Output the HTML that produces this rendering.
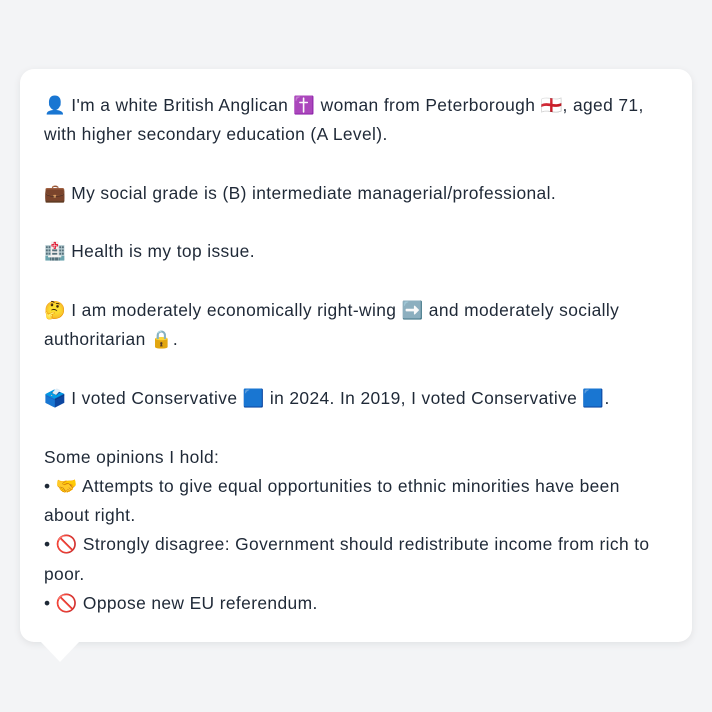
<!DOCTYPE html>
<html><head><meta charset="utf-8"><style>
html,body{margin:0;padding:0;background:#f3f4f6;width:712px;height:712px;overflow:hidden}
.card{position:absolute;left:20px;top:69px;width:672px;height:573px;background:#fff;border-radius:14px;box-shadow:0 2px 8px rgba(0,0,0,0.08)}
.tail{position:absolute;left:40px;top:641px;width:0;height:0;border-left:20px solid transparent;border-right:20px solid transparent;border-top:21px solid #fff}
.txt{position:absolute;left:44px;top:91px;font-family:"Liberation Sans","Noto Sans CJK SC",sans-serif;font-size:17.4px;letter-spacing:0.38px;line-height:29.3px;color:#1f2937;white-space:nowrap}
.l{height:29.3px}
</style></head><body>
<div class="card"></div><div class="tail"></div>
<div class="txt">
<div class="l">👤 I'm a white British Anglican ✝️ woman from Peterborough 🏴󠁧󠁢󠁥󠁮󠁧󠁿, aged 71,</div>
<div class="l">with higher secondary education (A Level).</div>
<div class="l"></div>
<div class="l">💼 My social grade is (B) intermediate managerial/professional.</div>
<div class="l"></div>
<div class="l">🏥 Health is my top issue.</div>
<div class="l"></div>
<div class="l">🤔 I am moderately economically right-wing ➡️ and moderately socially</div>
<div class="l">authoritarian 🔒.</div>
<div class="l"></div>
<div class="l">🗳️ I voted Conservative 🟦 in 2024. In 2019, I voted Conservative 🟦.</div>
<div class="l"></div>
<div class="l">Some opinions I hold:</div>
<div class="l">• 🤝 Attempts to give equal opportunities to ethnic minorities have been</div>
<div class="l">about right.</div>
<div class="l">• 🚫 Strongly disagree: Government should redistribute income from rich to</div>
<div class="l">poor.</div>
<div class="l">• 🚫 Oppose new EU referendum.</div>
</div>
</body></html>
